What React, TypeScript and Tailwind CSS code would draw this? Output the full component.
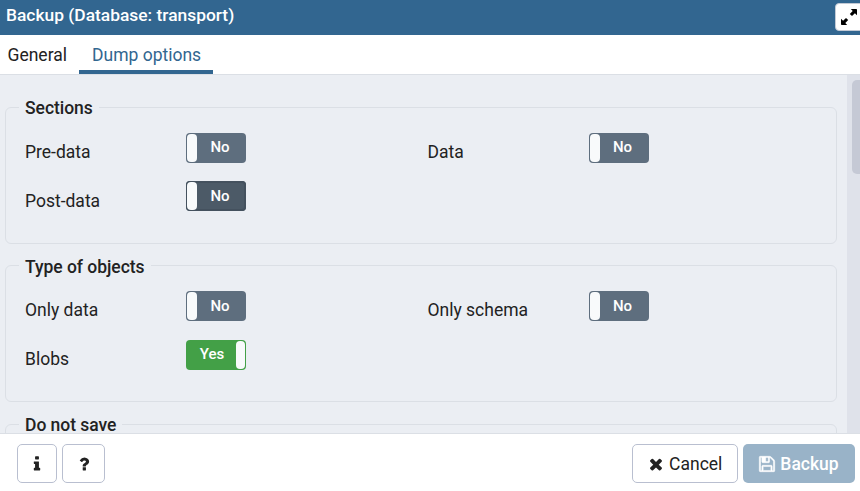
import type { ReactNode } from 'react';

const icons = {
  info: 'M1216 1344v128q0 26-19 45t-45 19h-512q-26 0-45-19t-19-45v-128q0-26 19-45t45-19h64v-384h-64q-26 0-45-19t-19-45v-128q0-26 19-45t45-19h384q26 0 45 19t19 45v576h64q26 0 45 19t19 45zm-128-1152v192q0 26-19 45t-45 19h-256q-26 0-45-19t-19-45v-192q0-26 19-45t45-19h256q26 0 45 19t19 45z',
  help: 'M1088 1256v240q0 16-12 28t-28 12h-240q-16 0-28-12t-12-28v-240q0-16 12-28t28-12h240q16 0 28 12t12 28zm316-600q0 54-15.5 101t-35 76.5-55 59.5-57.5 43.5-61 35.5q-41 23-68.5 65t-27.5 67q0 17-12 32.5t-28 15.5h-240q-15 0-25.5-18.5t-10.5-37.5v-45q0-83 65-156.5t143-108.5q59-27 84-56t25-76q0-42-46.5-74t-107.5-32q-65 0-108 29-35 25-107 115-13 16-31 16-12 0-25-8l-164-125q-13-10-15.5-25t5.5-28q160-266 464-266 80 0 161 31t146 83 106 127.5 41 158.5z',
  close: 'M1490 1322q0 40-28 68l-136 136q-28 28-68 28t-68-28l-294-294-294 294q-28 28-68 28t-68-28l-136-136q-28-28-28-68t28-68l294-294-294-294q-28-28-28-68t28-68l136-136q28-28 68-28t68 28l294 294 294-294q28-28 68-28t68 28l136 136q28 28 28 68t-28 68l-294 294 294 294q28 28 28 68z',
  save: 'M512 1536h768v-384h-768v384zm896 0h128v-896q0-14-10-38.5t-20-34.5l-281-281q-10-10-34-20t-39-10v416q0 40-28 68t-68 28h-576q-40 0-68-28t-28-68v-416h-128v1280h128v-416q0-40 28-68t68-28h832q40 0 68 28t28 68v416zm-384-928v-320q0-13-9.5-22.5t-22.5-9.5h-192q-13 0-22.5 9.5t-9.5 22.5v320q0 13 9.5 22.5t22.5 9.5h192q13 0 22.5-9.5t9.5-22.5zm640 32v928q0 40-28 68t-68 28h-1344q-40 0-68-28t-28-68v-1344q0-40 28-68t68-28h928q40 0 88 20t76 48l280 280q28 28 48 76t20 88z',
};

function Icon({ name, bold = false }: { name: keyof typeof icons; bold?: boolean }) {
  return (
    <svg viewBox="0 0 1792 1792" className="size-[18px] shrink-0 fill-current" aria-hidden="true">
      <path d={icons[name]} stroke={bold ? 'currentColor' : 'none'} strokeWidth="50" />
    </svg>
  );
}

function Toggle({ on = false, focused = false }: { on?: boolean; focused?: boolean }) {
  const tone = on
    ? 'flex-row-reverse bg-[#43a047]'
    : focused
      ? 'bg-[#4c5a67] shadow-[inset_0_0_0_2px_#44515e]'
      : 'bg-[#5e6e7e]';
  return (
    <button className={`flex h-[30px] w-[60px] rounded-[4px] p-px ${tone}`} role="switch" aria-checked={on}>
      <span className={`h-7 shrink-0 rounded-[4px] bg-[#f8fafb] ${on ? 'w-[9px]' : 'w-[10px]'}`} />
      <span className={`flex-1 pt-[0.2px] text-center text-[15px] leading-[26px] font-medium text-white ${on ? 'pl-px' : 'pr-0.5'}`}>
        {on ? 'Yes' : 'No'}
      </span>
    </button>
  );
}

function Field({ label, children }: { label: string; children: ReactNode }) {
  return (
    <div className="flex h-[30px] w-[402.5px] items-start">
      <span className="w-[161px] pt-[6.1px] leading-[27px]">{label}</span>
      {children}
    </div>
  );
}

function Group({ title, children }: { title: string; children?: ReactNode }) {
  return (
    <fieldset className="mb-[8.35px] h-[150px] w-[832px] shrink-0 rounded-[6px] border border-[#dbdfe5]">
      <legend className="ml-[13px] h-[27px] px-[6px] pt-[0.25px] leading-[28px] font-medium tracking-[-0.04px]">{title}</legend>
      <div className="flex flex-wrap gap-y-[18.45px] pt-3 pl-[19px]">{children}</div>
    </fieldset>
  );
}

const outlined = 'flex h-[39px] items-center justify-center rounded-[5px] border border-[#b9bfd0] bg-white';

export default function App() {
  return (
    <div className="flex h-[491px] w-[860px] flex-col overflow-hidden bg-white font-[Roboto,sans-serif] text-[17.5px] text-[#222222]">
      <header className="flex h-[35px] shrink-0 items-start justify-between bg-[#326690] pl-[6px] text-white">
        <h1 className="pt-px text-[17.4px] leading-[28px] font-medium">Backup (Database: transport)</h1>
        <button className="mt-[3px] -mr-1 flex h-[28px] w-[29px] rounded-[4px] border border-[#c3cad5] bg-white pt-[5px] pl-[5px] text-black" aria-label="Maximize">
          <svg viewBox="0 0 16 16" className="size-4 fill-current" aria-hidden="true">
            <path d="M9.8 0H15.2Q16 0 16 .8V6.2L13.9 4.3 11 7.1 8.8 5l2.9-2.9zM0 9.8l2.1 1.9L5 8.9 7.2 11l-2.9 2.9L6.2 16H.8Q0 16 0 15.2z" />
          </svg>
        </button>
      </header>

      <nav className="flex h-10 shrink-0 border-b border-[#dbdfe5] leading-[41px]">
        <span className="w-[79px] pl-[7.5px]">General</span>
        <span className="h-[39px] w-[134px] border-b-4 border-[#326690] pl-[13px] text-[#326690]">Dump options</span>
      </nav>

      <main className="flex min-h-0 flex-1 justify-between bg-[#ebeef3]">
        <div className="flex flex-col overflow-hidden pt-[19px] pl-[5px]">
          <Group title="Sections">
            <Field label="Pre-data"><Toggle /></Field>
            <Field label="Data"><Toggle /></Field>
            <Field label="Post-data"><Toggle focused /></Field>
          </Group>
          <Group title="Type of objects">
            <Field label="Only data"><Toggle /></Field>
            <Field label="Only schema"><Toggle /></Field>
            <Field label="Blobs"><Toggle on /></Field>
          </Group>
          <Group title="Do not save" />
        </div>
        <div className="w-[13px] overflow-hidden bg-[#dfe2ea] pt-[5px] pl-[5px]">
          <div className="h-[94px] w-[14px] rounded-[5px] bg-[#c5c9d5]" />
        </div>
      </main>

      <footer className="flex h-[58px] shrink-0 items-start border-t border-[#dbdfe5] pt-[10px] pr-[5px] pl-[17px]">
        <button className={`${outlined} w-10`} aria-label="Info"><Icon name="info" /></button>
        <button className={`${outlined} ml-[5px] w-[43px]`} aria-label="Help"><Icon name="help" /></button>
        <button className={`${outlined} ml-auto w-[106px] gap-[4.5px] pr-px`}>
          <Icon name="close" />
          <span className="pt-[2px]">Cancel</span>
        </button>
        <button className="ml-[5px] flex h-[39px] w-[112px] items-center justify-center gap-[4px] rounded-[5px] bg-[#99b3c8] pr-px font-medium text-white">
          <Icon name="save" bold />
          <span className="pt-[2px]">Backup</span>
        </button>
      </footer>
    </div>
  );
}
